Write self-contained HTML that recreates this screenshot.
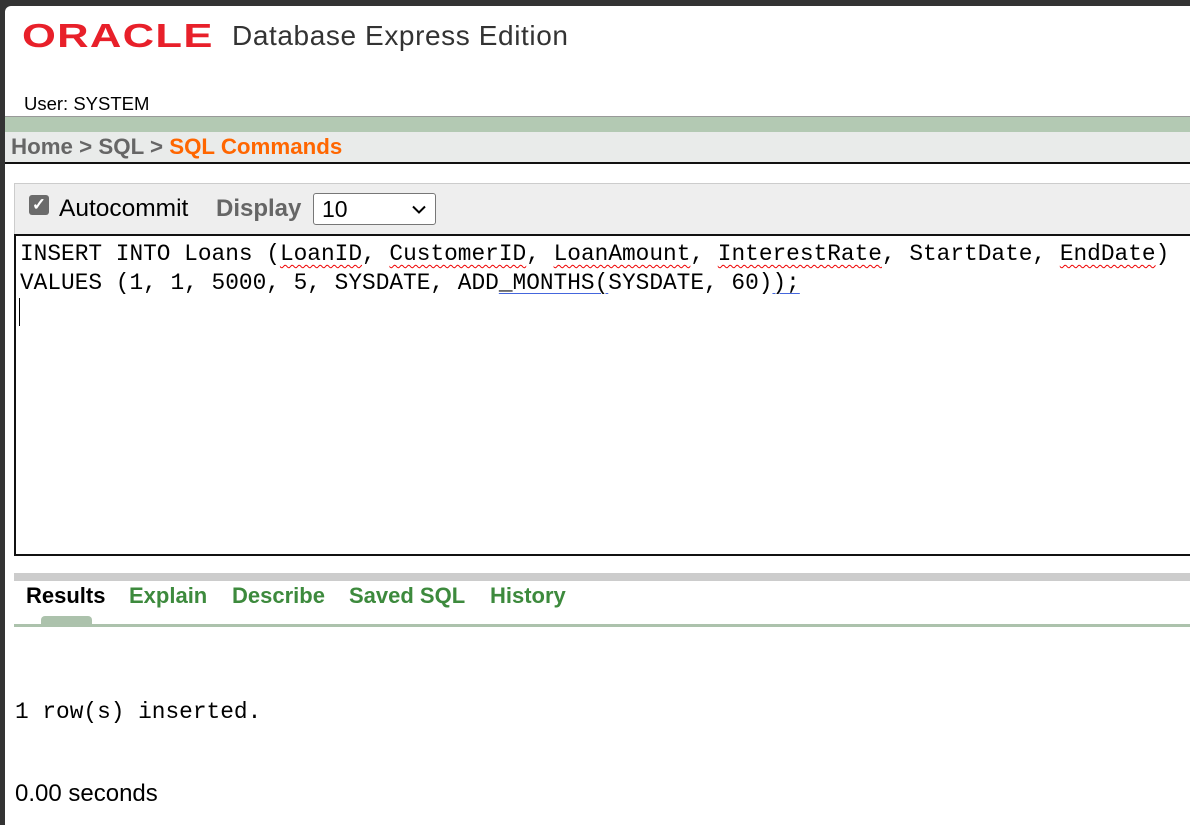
<!DOCTYPE html>
<html><head><meta charset="utf-8"><style>
*{margin:0;padding:0;box-sizing:border-box}
body{width:1190px;height:825px;overflow:hidden;background:#333;position:relative;font-family:"Liberation Sans",Arial,sans-serif}
#page{position:absolute;left:5px;top:6px;right:0;bottom:0;background:#fff;border-top-left-radius:6px;overflow:hidden}
.a{position:absolute;white-space:nowrap}
.mono{font-family:"Liberation Mono",monospace;font-size:22.8px;color:#000}
.w{text-decoration:underline wavy #e00;text-decoration-thickness:1px;text-underline-offset:4px}
.u{text-decoration:underline #4466dd;text-decoration-thickness:1px;text-underline-offset:4px}
</style></head><body>
<div id="page">
 <div class="a" style="left:17px;top:12px;font-size:33.5px;font-weight:bold;color:#e8202a;letter-spacing:1px;transform:scaleX(1.3);transform-origin:left">ORACLE</div>
 <div class="a" style="left:227px;top:14px;font-size:28px;letter-spacing:0.6px;color:#333">Database Express Edition</div>
 <div class="a" style="left:19px;top:87px;font-size:18.5px;color:#000">User: SYSTEM</div>
 <div class="a" style="left:0;top:110px;width:1190px;height:16px;background:#b3c9b3;border-top:1px solid #999"></div>
 <div class="a" style="left:0;top:126px;width:1190px;height:32px;background:#e9ebea;border-bottom:2px solid #111"></div>
 <div class="a" style="left:6px;top:128px;font-size:22.3px;font-weight:bold;color:#666">Home &gt; SQL &gt; <span style="color:#f60">SQL Commands</span></div>
 <div class="a" style="left:9px;top:177px;width:1190px;height:52px;background:#eee;border:1px solid #ccc"></div>
 <div class="a" style="left:24px;top:189px;width:20px;height:20px;background:#6b6b6b;border-radius:3px;color:#fff;font-size:17px;line-height:20px;text-align:center;font-weight:bold">✓</div>
 <div class="a" style="left:54px;top:189px;font-size:24.5px;color:#000">Autocommit</div>
 <div class="a" style="left:211px;top:189px;font-size:24px;font-weight:bold;color:#666">Display</div>
 <div class="a" style="left:308px;top:187px;width:123px;height:32px;background:#fff;border:1px solid #777;border-radius:3px;font-size:23px;padding:2px 8px">10<svg style="position:absolute;right:9px;top:11px" width="14" height="9" viewBox="0 0 14 9"><path d="M1 1.5 L7 7.5 L13 1.5" fill="none" stroke="#000" stroke-width="2"/></svg></div>
 <div class="a" style="left:9px;top:228px;width:1190px;height:322px;border:2px solid #111;border-right:none;background:#fff"></div>
 <div class="a mono" style="left:15px;top:234px;line-height:29px">INSERT INTO Loans (<span class="w">LoanID</span>, <span class="w">CustomerID</span>, <span class="w">LoanAmount</span>, <span class="w">InterestRate</span>, StartDate, <span class="w">EndDate</span>)<br>VALUES (1, 1, 5000, 5, SYSDATE, ADD<span class="u">_MONTHS(</span>SYSDATE, 60)<span class="u">);</span></div>
 <div class="a" style="left:14px;top:292px;width:1px;height:28px;background:#000"></div>
 <div class="a" style="left:9px;top:567px;width:1190px;height:8px;background:#ccc"></div>
 <div class="a" style="left:21px;top:577px;font-size:22px;font-weight:bold;color:#000">Results</div>
 <div class="a" style="left:124px;top:577px;font-size:22px;font-weight:bold;color:#3d8a3d">Explain</div>
 <div class="a" style="left:227px;top:577px;font-size:22px;font-weight:bold;color:#3d8a3d">Describe</div>
 <div class="a" style="left:344px;top:577px;font-size:22px;font-weight:bold;color:#3d8a3d">Saved SQL</div>
 <div class="a" style="left:485px;top:577px;font-size:22px;font-weight:bold;color:#3d8a3d">History</div>
 <div class="a" style="left:36px;top:610px;width:51px;height:9px;background:#acc2ac;border-radius:4px 4px 0 0"></div>
 <div class="a" style="left:9px;top:618px;width:1190px;height:3px;background:#acc2ac"></div>
 <div class="a mono" style="left:10px;top:693px">1 row(s) inserted.</div>
 <div class="a" style="left:10px;top:774px;font-size:24px;color:#000">0.00 seconds</div>
</div>
</body></html>
